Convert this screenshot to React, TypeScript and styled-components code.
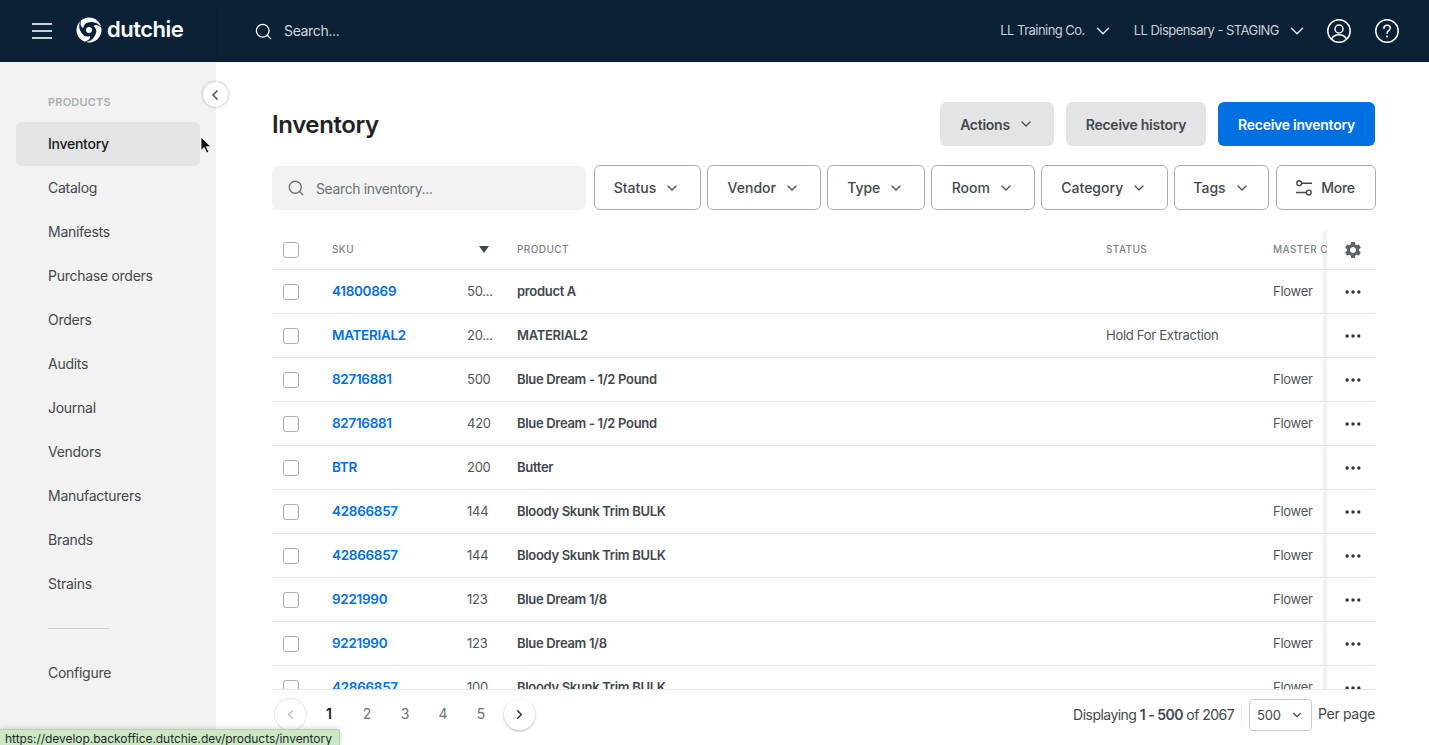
import React from 'react';
import styled, { createGlobalStyle } from 'styled-components';
import { Search, ChevronDown, ChevronLeft, ChevronRight, Ellipsis } from 'lucide-react';
import { MdSettings } from 'react-icons/md';

const GlobalStyle = createGlobalStyle`
    html, body {
        margin: 0;
        height: 100%;
        overflow: hidden;
    }
    body {
        font-family: Inter, "Liberation Sans", sans-serif;
        color: #2c3236;
        background: #fff;
    }
    * {
        box-sizing: border-box;
    }
`;

const Page = styled.div`
    width: 1429px;
    height: 745px;
    display: flex;
    flex-direction: column;
    position: relative;
    overflow: hidden;
`;

const Header = styled.header`
    height: 62px;
    flex-shrink: 0;
    background: #0b2135;
    display: flex;
    align-items: center;
    color: #fff;
`;

const Brand = styled.div`
    width: 217px;
    height: 50px;
    flex-shrink: 0;
    padding-left: 32px;
    display: flex;
    align-items: center;
    border-right: 1px solid #0f1c29;
`;

const Burger = styled.div`
    width: 20px;
    display: flex;
    flex-direction: column;
    gap: 5.7px;
    margin-right: 24px;

    span {
        height: 1.5px;
        background: #c9d0d6;
    }
`;

const LogoMark = styled.svg`
    margin-top: -3px;
`;

const Wordmark = styled.span`
    font-size: 22px;
    font-weight: 600;
    letter-spacing: -0.5px;
    margin-left: 5px;
    margin-top: -4px;
`;

const HeaderSearch = styled.div`
    display: flex;
    align-items: center;
    gap: 11px;
    margin-left: 37px;
    font-size: 14px;
    letter-spacing: -0.35px;
    color: #d5dade;
    flex: 1;

    span {
        margin-bottom: 2px;
    }
`;

const Picker = styled.div`
    display: flex;
    align-items: center;
    gap: 7px;
    font-size: 13px;
    color: #c9d0d6;
    margin-right: 20px;
    letter-spacing: -0.54px;

    span {
        margin-bottom: 3px;
    }
`;

const RoundIcons = styled.div`
    display: flex;
    gap: 24px;
    margin-right: 30px;
    margin-left: -1px;
`;

const Body = styled.div`
    flex: 1;
    min-height: 0;
    display: flex;
`;

const Sidebar = styled.aside`
    width: 216px;
    flex-shrink: 0;
    background: #f2f2f2;
    padding: 33px 16px 0;
    position: relative;
`;

const SectionLabel = styled.div`
    font-size: 11px;
    font-weight: 600;
    letter-spacing: 0.2px;
    color: #a9afb3;
    padding-left: 32px;
    height: 27px;
    line-height: 14px;
`;

const NavItem = styled.div<{ $active?: boolean }>`
    height: 44px;
    display: flex;
    align-items: center;
    padding: 0 0 2px 32px;
    font-size: 14px;
    letter-spacing: -0.27px;
    border-radius: 6px;
    color: ${(p) => (p.$active ? '#17191b' : '#42484d')};
    font-weight: ${(p) => (p.$active ? 500 : 400)};
    background: ${(p) => (p.$active ? '#e3e4e6' : 'transparent')};
`;

const NavRule = styled.div`
    width: 61px;
    height: 1px;
    background: #cfd2d4;
    margin: 22px 0 22px 32px;
`;

const CollapseButton = styled.div`
    position: absolute;
    top: 20px;
    right: -12px;
    width: 25px;
    height: 25px;
    padding-right: 1px;
    border-radius: 50%;
    background: #fff;
    box-shadow: 0 0 3px rgba(0, 0, 0, 0.35);
    display: flex;
    align-items: center;
    justify-content: center;
    color: #4e555a;
`;

const Main = styled.main`
    flex: 1;
    min-width: 0;
    padding: 40px 54px 0 56px;
    display: flex;
    flex-direction: column;
`;

const TitleRow = styled.div`
    height: 44px;
    display: flex;
    align-items: center;
    gap: 12px;
    margin-bottom: 19px;
`;

const Title = styled.h1`
    margin: 0 auto 0 0;
    font-size: 24px;
    font-weight: 600;
    letter-spacing: -0.4px;
    color: #1f2326;
`;

const SolidButton = styled.div<{ $primary?: boolean; $w: number }>`
    width: ${(p) => p.$w}px;
    height: 44px;
    border-radius: 6px;
    display: flex;
    align-items: center;
    justify-content: center;
    gap: 8px;
    font-size: 14px;
    font-weight: 600;
    letter-spacing: -0.26px;
    background: ${(p) => (p.$primary ? '#0070e0' : '#e3e4e6')};
    color: ${(p) => (p.$primary ? '#fff' : '#42484d')};
`;

const FilterRow = styled.div`
    display: flex;
    gap: 6.5px;
    height: 45px;
    margin-bottom: 20px;
`;

const SearchBox = styled.div`
    width: 314px;
    height: 44px;
    margin-top: 1px;
    margin-right: 1px;
    border-radius: 6px;
    background: #f2f2f2;
    display: flex;
    flex-shrink: 0;
    align-items: center;
    gap: 11px;
    padding-left: 15px;
    font-size: 14px;
    letter-spacing: -0.37px;
    color: #6b7278;
`;

const FilterButton = styled.div<{ $w: number }>`
    width: ${(p) => p.$w}px;
    flex-shrink: 0;
    border: 1px solid #a8adb1;
    border-radius: 6px;
    display: flex;
    align-items: center;
    justify-content: center;
    gap: 8px;
    font-size: 14px;
    font-weight: 500;
    color: #42484d;
`;

const MoreLabel = styled.span`
    margin-left: 1px;
    letter-spacing: -0.3px;
`;

const TableArea = styled.div`
    flex: 1;
    min-height: 0;
    overflow: hidden;
    border-bottom: 1px solid #e3e4e6;
`;

const columns = '60px 135px 50px 589px 167px 54px 48px';

const HeadRow = styled.div`
    display: grid;
    grid-template-columns: ${columns};
    height: 40px;
    align-items: center;
    border-bottom: 1px solid #e3e4e6;
    font-size: 10px;
    font-weight: 500;
    letter-spacing: 0.4px;
    color: #7b8287;
`;

const Row = styled.div`
    display: grid;
    grid-template-columns: ${columns};
    height: 44px;
    align-items: center;
    border-bottom: 1px solid #e3e4e6;
    font-size: 13px;
    letter-spacing: -0.27px;
    color: #4e555a;
`;

const Box = styled.span`
    display: block;
    width: 16px;
    height: 16px;
    margin-left: 11px;
    border: 1px solid #a8adb1;
    border-radius: 3px;
    background: #fff;
`;

const Cell = styled.div`
    white-space: nowrap;
    overflow: hidden;
    margin-bottom: 2px;
`;

const SortCell = styled.div`
    padding-left: 12px;
    line-height: 0;
`;

const SkuLink = styled(Cell)`
    font-size: 13.5px;
    font-weight: 600;
    letter-spacing: -0.3px;
    color: #0070e0;
`;

const ProductCell = styled(Cell)`
    font-weight: 600;
    letter-spacing: -0.32px;
    color: #42484d;
`;

const ActionCell = styled.div`
    position: relative;
    height: 100%;
    padding-left: 4px;
    display: flex;
    align-items: center;
    justify-content: center;
    color: #2c3236;
    background: #fff;

    &::before {
        content: '';
        position: absolute;
        left: -4px;
        top: 0;
        bottom: 0;
        width: 4px;
        background: rgba(0, 0, 0, 0.05);
        border-top-left-radius: 4px;
    }
`;

const Footer = styled.div`
    height: 55px;
    flex-shrink: 0;
    display: flex;
    align-items: center;
    font-size: 14px;
    color: #42484d;
    padding-bottom: 6px;
    letter-spacing: -0.53px;
`;

const PageArrow = styled.div<{ $off?: boolean }>`
    width: 31px;
    height: 31px;
    margin-left: 3px;
    border-radius: 50%;
    background: #fff;
    display: flex;
    align-items: center;
    justify-content: center;
    color: ${(p) => (p.$off ? '#b5babd' : '#2c3236')};
    box-shadow: ${(p) => (p.$off ? '0 0 0 1px #e3e4e6' : '0 1px 3px rgba(0,0,0,0.3)')};
`;

const PageNumber = styled.div<{ $current?: boolean }>`
    width: 38px;
    text-align: center;
    letter-spacing: 0;
    margin-bottom: 2px;
    color: ${(p) => (p.$current ? '#17191b' : '#6b7278')};
    font-weight: ${(p) => (p.$current ? 600 : 400)};
`;

const Numbers = styled.div`
    display: flex;
    margin: 0 1px 0 4px;
`;

const Displaying = styled.div`
    margin-left: auto;
    padding-right: 7px;
    margin-right: 7px;
    line-height: 20px;
    border-right: 1px solid #eceded;

    b {
        font-weight: 600;
    }
`;

const PerPage = styled.div`
    width: 63px;
    height: 32px;
    border: 1px solid #c5c9cc;
    border-radius: 4px;
    display: flex;
    align-items: center;
    gap: 9px;
    padding-left: 7px;
    font-size: 13px;
    letter-spacing: -0.2px;
    margin-right: 6px;
`;

const PerPageLabel = styled.span`
    letter-spacing: -0.33px;
    margin-bottom: 2px;
`;

const StatusBubble = styled.div`
    position: absolute;
    left: 0;
    bottom: 0;
    width: 340px;
    height: 16px;
    background: #cce8c2;
    border: 1px solid #b4d1a9;
    border-left: none;
    border-bottom: none;
    border-top-right-radius: 3px;
    box-shadow: 0 0 6px rgba(0, 0, 0, 0.18);
    font-size: 12px;
    letter-spacing: -0.05px;
    line-height: 18px;
    padding-left: 5px;
    color: #22282c;
    white-space: nowrap;
    overflow: hidden;
`;

const Cursor = styled.svg`
    position: absolute;
    left: 200px;
    top: 136px;
`;

const navItems = ['Inventory', 'Catalog', 'Manifests', 'Purchase orders', 'Orders', 'Audits', 'Journal', 'Vendors', 'Manufacturers', 'Brands', 'Strains'];

const filters: [string, number][] = [
    ['Status', 107],
    ['Vendor', 113.5],
    ['Type', 97.5],
    ['Room', 103.5],
    ['Category', 126.5],
    ['Tags', 95],
];

const rows = [
    ['41800869', '50...', 'product A', '', 'Flower'],
    ['MATERIAL2', '20...', 'MATERIAL2', 'Hold For Extraction', ''],
    ['82716881', '500', 'Blue Dream - 1/2 Pound', '', 'Flower'],
    ['82716881', '420', 'Blue Dream - 1/2 Pound', '', 'Flower'],
    ['BTR', '200', 'Butter', '', ''],
    ['42866857', '144', 'Bloody Skunk Trim BULK', '', 'Flower'],
    ['42866857', '144', 'Bloody Skunk Trim BULK', '', 'Flower'],
    ['9221990', '123', 'Blue Dream 1/8', '', 'Flower'],
    ['9221990', '123', 'Blue Dream 1/8', '', 'Flower'],
    ['42866857', '100', 'Bloody Skunk Trim BULK', '', 'Flower'],
];

// one swirl of the logo, repeated at 120 degree steps
const blade = 'M4.970 3.420A12.500 12.500 0 0 1 25.070 9.760C22.500 6.800 20 5.400 17.500 5.200 14.800 4.800 12.500 5.200 10.430 5.950 8.600 7 7.600 9 7.360 10.950 6 10.500 4.900 9.400 4.770 8.250 4.500 6.600 4.500 5 4.970 3.420z';

const Logo = () => (
    <LogoMark width="26" height="26" viewBox="0 0 26 26" fill="#fff">
        <path d={blade} />
        <path d={blade} transform="rotate(120 13 13)" />
        <path d={blade} transform="rotate(240 13 13)" />
        <circle cx="13" cy="13" r="3" />
    </LogoMark>
);

const UserIcon = () => (
    <svg width="24" height="24" viewBox="0 0 24 24" fill="none" stroke="#fff" strokeWidth="1.500">
        <circle cx="12" cy="12" r="11.200" />
        <circle cx="12" cy="10" r="4" />
        <path d="M4.500 20c1.500-3 4-4.200 7.500-4.200s6 1.200 7.500 4.200" />
    </svg>
);

const HelpIcon = () => (
    <svg width="24" height="24" viewBox="0 0 24 24" fill="none" stroke="#fff" strokeWidth="1.500">
        <circle cx="12" cy="12" r="11.200" />
        <path d="M8.800 9.300c.2-1.900 1.500-3 3.300-3s3.200 1.200 3.200 2.800c0 2.500-3.300 2.600-3.300 5.200" strokeLinecap="round" />
        <circle cx="12" cy="17.500" r="1" fill="#fff" stroke="none" />
    </svg>
);

const SlidersIcon = () => (
    <svg width="16" height="16" viewBox="0 0 16 16" fill="none" stroke="#42484d" strokeWidth="1.400">
        <circle cx="3.200" cy="3.200" r="2.400" />
        <path d="M5.600 3.200H16M0 12.500h10.400" />
        <circle cx="12.800" cy="12.500" r="2.400" />
    </svg>
);

const App: React.FC = () => {
    return (
        <Page>
            <GlobalStyle />
            <Header>
                <Brand>
                    <Burger>
                        <span />
                        <span />
                        <span />
                    </Burger>
                    <Logo />
                    <Wordmark>dutchie</Wordmark>
                </Brand>
                <HeaderSearch>
                    <Search size={19} strokeWidth={1.6} color="#fff" />
                    <span>Search...</span>
                </HeaderSearch>
                <Picker>
                    <span>LL Training Co.</span>
                    <ChevronDown size={22} strokeWidth={1.5} color="#e8ebed" />
                </Picker>
                <Picker>
                    <span>LL Dispensary - STAGING</span>
                    <ChevronDown size={22} strokeWidth={1.5} color="#e8ebed" />
                </Picker>
                <RoundIcons>
                    <UserIcon />
                    <HelpIcon />
                </RoundIcons>
            </Header>
            <Body>
                <Sidebar>
                    <SectionLabel>PRODUCTS</SectionLabel>
                    {navItems.map((item, i) => (
                        <NavItem key={item} $active={i === 0}>
                            {item}
                        </NavItem>
                    ))}
                    <NavRule />
                    <NavItem>Configure</NavItem>
                    <CollapseButton>
                        <ChevronLeft size={16} strokeWidth={2.5} />
                    </CollapseButton>
                </Sidebar>
                <Main>
                    <TitleRow>
                        <Title>Inventory</Title>
                        <SolidButton $w={114}>
                            Actions
                            <ChevronDown size={16} strokeWidth={1.8} />
                        </SolidButton>
                        <SolidButton $w={140}>Receive history</SolidButton>
                        <SolidButton $w={157} $primary>
                            Receive inventory
                        </SolidButton>
                    </TitleRow>
                    <FilterRow>
                        <SearchBox>
                            <Search size={18} strokeWidth={1.7} color="#6b7278" />
                            Search inventory...
                        </SearchBox>
                        {filters.map(([name, w]) => (
                            <FilterButton key={name} $w={w}>
                                {name}
                                <ChevronDown size={16} strokeWidth={1.8} />
                            </FilterButton>
                        ))}
                        <FilterButton $w={100}>
                            <SlidersIcon />
                            <MoreLabel>More</MoreLabel>
                        </FilterButton>
                    </FilterRow>
                    <TableArea>
                        <HeadRow>
                            <Box />
                            <Cell>SKU</Cell>
                            <SortCell>
                                <svg width="10" height="7" viewBox="0 0 10 7">
                                    <path d="M0 0h10L5 7z" fill="#42484d" />
                                </svg>
                            </SortCell>
                            <Cell>PRODUCT</Cell>
                            <Cell>STATUS</Cell>
                            <Cell>MASTER C</Cell>
                            <ActionCell>
                                <MdSettings size={20} color="#5d6469" />
                            </ActionCell>
                        </HeadRow>
                        {rows.map((row, i) => (
                            <Row key={i}>
                                <Box />
                                <SkuLink>{row[0]}</SkuLink>
                                <Cell>{row[1]}</Cell>
                                <ProductCell>{row[2]}</ProductCell>
                                <Cell>{row[3]}</Cell>
                                <Cell>{row[4]}</Cell>
                                <ActionCell>
                                    <Ellipsis size={20} strokeWidth={2.1} />
                                </ActionCell>
                            </Row>
                        ))}
                    </TableArea>
                    <Footer>
                        <PageArrow $off>
                            <ChevronLeft size={15} strokeWidth={2} />
                        </PageArrow>
                        <Numbers>
                            {[1, 2, 3, 4, 5].map((n) => (
                                <PageNumber key={n} $current={n === 1}>
                                    {n}
                                </PageNumber>
                            ))}
                        </Numbers>
                        <PageArrow>
                            <ChevronRight size={15} strokeWidth={2.4} />
                        </PageArrow>
                        <Displaying>
                            Displaying <b>1 - 500</b> of 2067
                        </Displaying>
                        <PerPage>
                            500
                            <ChevronDown size={14} strokeWidth={2} />
                        </PerPage>
                        <PerPageLabel>Per page</PerPageLabel>
                    </Footer>
                </Main>
            </Body>
            <StatusBubble>https://develop.backoffice.dutchie.dev/products/inventory</StatusBubble>
            <Cursor width="12" height="18" viewBox="0 0 12 18">
                <path d="M1 1v13.500l3.200-3 2.400 5.500 2.200-1-2.400-5.200H11z" fill="#111" stroke="#fff" strokeWidth="0.8" />
            </Cursor>
        </Page>
    );
};

export default App;
